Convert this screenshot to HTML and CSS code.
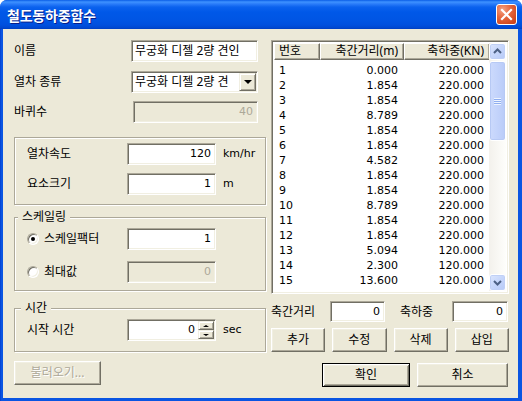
FILE: index.html
```html
<!DOCTYPE html>
<html lang="ko">
<head>
<meta charset="utf-8">
<title>철도동하중함수</title>
<link rel="stylesheet" href="styles.css">
</head>
<body>
<div class="window">
  <div class="titlebar">
    <span class="title">철도동하중함수</span>
    <span class="close"><svg width="19" height="19" viewBox="0 0 19 19"><path d="M5 5 L14 14 M14 5 L5 14" stroke="#fff" stroke-width="2.2" stroke-linecap="square"/></svg></span>
  </div>
  <div class="frame">
    <div class="client">
      <div class="left">
        <div class="row top-row">
          <span class="lbl lbl-top">이름</span>
          <div class="edit w-top">무궁화 디젤 2량 견인</div>
        </div>
        <div class="row top-row gap9">
          <span class="lbl lbl-top">열차 종류</span>
          <div class="edit combo w-top"><span class="combo-text">무궁화 디젤 2량 견</span><span class="dd"><span class="tri-down"></span></span></div>
        </div>
        <div class="row top-row gap8">
          <span class="lbl lbl-top">바퀴수</span>
          <div class="edit disabled w-wheel num latin">40</div>
        </div>

        <div class="group g1">
          <div class="row">
            <span class="lbl lbl-g">열차속도</span>
            <div class="edit w-g num latin">120</div>
            <span class="unit latin">km/hr</span>
          </div>
          <div class="row gap8">
            <span class="lbl lbl-g">요소크기</span>
            <div class="edit w-g num latin">1</div>
            <span class="unit latin">m</span>
          </div>
        </div>

        <div class="group g2">
          <span class="gtitle gt2">스케일링</span>
          <div class="row">
            <span class="lbl lbl-g radio-lbl"><span class="radio checked"></span>스케일팩터</span>
            <div class="edit w-g num latin">1</div>
          </div>
          <div class="row gap11">
            <span class="lbl lbl-g radio-lbl"><span class="radio"></span>최대값</span>
            <div class="edit disabled w-g num latin">0</div>
          </div>
        </div>

        <div class="group g3">
          <span class="gtitle gt3">시간</span>
          <div class="row">
            <span class="lbl lbl-g">시작 시간</span>
            <div class="edit spin-edit w-g"><span class="spin-val latin">0</span><span class="spin"><span class="sbtn"><span class="tri-up"></span></span><span class="sbtn"><span class="tri-down small"></span></span></span></div>
            <span class="unit latin">sec</span>
          </div>
        </div>

        <div class="btn disabled-btn load-btn">불러오기...</div>
      </div>

      <div class="right">
        <div class="listview">
          <div class="lv-main">
            <div class="lv-head">
              <span class="hcell">번호</span>
              <span class="hcell">축간거리(m)</span>
              <span class="hcell">축하중(KN)</span>
              <span class="hfill"></span>
            </div>
            <div class="lv-body latin">
              <div class="lv-row"><span>1</span><span>0.000</span><span>220.000</span></div>
              <div class="lv-row"><span>2</span><span>1.854</span><span>220.000</span></div>
              <div class="lv-row"><span>3</span><span>1.854</span><span>220.000</span></div>
              <div class="lv-row"><span>4</span><span>8.789</span><span>220.000</span></div>
              <div class="lv-row"><span>5</span><span>1.854</span><span>220.000</span></div>
              <div class="lv-row"><span>6</span><span>1.854</span><span>220.000</span></div>
              <div class="lv-row"><span>7</span><span>4.582</span><span>220.000</span></div>
              <div class="lv-row"><span>8</span><span>1.854</span><span>220.000</span></div>
              <div class="lv-row"><span>9</span><span>1.854</span><span>220.000</span></div>
              <div class="lv-row"><span>10</span><span>8.789</span><span>220.000</span></div>
              <div class="lv-row"><span>11</span><span>1.854</span><span>220.000</span></div>
              <div class="lv-row"><span>12</span><span>1.854</span><span>220.000</span></div>
              <div class="lv-row"><span>13</span><span>5.094</span><span>120.000</span></div>
              <div class="lv-row"><span>14</span><span>2.300</span><span>120.000</span></div>
              <div class="lv-row"><span>15</span><span>13.600</span><span>120.000</span></div>
              <div class="lv-row"><span>16</span><span>2.300</span><span>120.000</span></div>
            </div>
          </div>
          <div class="vscroll">
            <span class="sb-btn"><svg width="15" height="15" viewBox="0 0 15 15"><path d="M4 9 L7.5 5.5 L11 9" fill="none" stroke="#4D6185" stroke-width="2"/></svg></span>
            <span class="sb-track">
              <span class="sb-thumb"><span class="grip"></span></span>
            </span>
            <span class="sb-btn"><svg width="15" height="15" viewBox="0 0 15 15"><path d="M4 6 L7.5 9.5 L11 6" fill="none" stroke="#4D6185" stroke-width="2"/></svg></span>
          </div>
        </div>

        <div class="axle-row">
          <span class="lbl-axle">축간거리</span>
          <div class="edit num latin w-axle1">0</div>
          <span class="lbl-load">축하중</span>
          <div class="edit num latin w-axle2">0</div>
        </div>

        <div class="btn-grid">
          <div class="btn">추가</div>
          <div class="btn">수정</div>
          <div class="btn">삭제</div>
          <div class="btn">삽입</div>
        </div>

        <div class="dlg-btns">
          <div class="btn default-btn ok-btn">확인</div>
          <div class="btn cancel-btn">취소</div>
        </div>
      </div>
    </div>
  </div>
</div>
</body>
</html>
```
FILE: styles.css
```css
* { box-sizing: border-box; }
html, body { margin: 0; padding: 0; }
body {
  width: 522px;
  height: 401px;
  overflow: hidden;
  background: #ffffff;
  font-family: "Noto Sans", "Noto Sans CJK KR", sans-serif;
  font-size: 12px;
  line-height: 14px;
  color: #000;
}
.latin {
  font-family: "DejaVu Sans", "Noto Sans CJK KR", sans-serif;
  font-size: 11px;
}

.window {
  width: 522px;
  height: 401px;
  display: flex;
  flex-direction: column;
  background: #0A50DE;
  border-radius: 7px 7px 0 0;
  overflow: hidden;
}

.titlebar {
  height: 29px;
  flex: none;
  display: flex;
  align-items: center;
  justify-content: space-between;
  padding: 0 5px 0 7px;
  background: linear-gradient(to bottom, #0A5DE6 0px, #3E92FF 2px, #2A7CF9 4px, #0B62EE 7px, #0058E8 12px, #0055E4 20px, #0050DE 25px, #0047CF 28px, #003DBE 29px);
}
.title {
  color: #fff;
  font-family: "Noto Sans CJK KR", sans-serif;
  font-weight: bold;
  font-size: 14px;
  line-height: 16px;
  text-shadow: 1px 1px 0 #0A1F8A;
  letter-spacing: -0.2px;
}
.close {
  width: 21px;
  height: 21px;
  border: 1px solid #fff;
  border-radius: 3px;
  display: flex;
  align-items: center;
  justify-content: center;
  background: radial-gradient(circle at 30% 25%, #F4A284 0%, #E6683F 40%, #D1471E 80%, #C43E18 100%);
}

.frame {
  flex: 1;
  display: flex;
  padding: 0 4px 3px 3px;
  background: linear-gradient(to right, #0036C8 0px, #0A55E2 1px, #0A55E2 521px);
}

.client {
  flex: 1;
  background: #ECE9D8;
  display: flex;
  gap: 5px;
  padding: 11px 0 0 11px;
}

.left { width: 252px; display: flex; flex-direction: column; }
.right { width: 238px; display: flex; flex-direction: column; }

.row { display: flex; align-items: center; height: 22px; flex: none; }
.gap8 { margin-top: 8px; }
.gap9 { margin-top: 9px; }
.gap11 { margin-top: 11px; }

.lbl { flex: none; white-space: nowrap; }
.lbl-top { width: 117px; }
.lbl-g { width: 100px; }

.edit {
  height: 22px;
  flex: none;
  background: #fff;
  border: 1px solid;
  border-color: #ACA899 #fff #fff #ACA899;
  box-shadow: inset 1px 1px 0 #716F64, inset -1px -1px 0 #F1EFE2;
  padding: 0 4px 0 3px;
  display: flex;
  align-items: center;
  white-space: nowrap;
  overflow: hidden;
}
.num { justify-content: flex-end; }
.disabled { background: #ECE9D8; color: #ACA899; }
.w-top { width: 127px; }
.w-wheel { width: 125px; margin-left: 2px; }
.w-g { width: 89px; }

.combo { padding: 0 1px 0 3px; justify-content: space-between; }
.combo-text { flex: none; }
.dd {
  width: 17px;
  height: 18px;
  flex: none;
  background: #ECE9D8;
  border: 1px solid;
  border-color: #F1EFE2 #716F64 #716F64 #F1EFE2;
  box-shadow: inset 1px 1px 0 #fff, inset -1px -1px 0 #ACA899;
  display: flex;
  align-items: center;
  justify-content: center;
}
.tri-down {
  width: 0; height: 0;
  border-left: 4px solid transparent;
  border-right: 4px solid transparent;
  border-top: 4px solid #000;
}
.tri-down.small {
  border-left-width: 3px;
  border-right-width: 3px;
  border-top-width: 2px;
}
.tri-up {
  width: 0; height: 0;
  border-left: 3px solid transparent;
  border-right: 3px solid transparent;
  border-bottom: 2px solid #000;
}

.unit { margin-left: 7px; white-space: nowrap; }

.group {
  position: relative;
  flex: none;
  border: 1px solid #ACA899;
  box-shadow: inset 1px 1px 0 #fff, 1px 1px 0 #fff;
  padding-left: 12px;
}
.g1 { margin-top: 14px; padding-top: 5px; padding-bottom: 9px; }
.g2 { margin-top: 12px; padding-top: 10px; padding-bottom: 7px; }
.g3 { margin-top: 17px; padding-top: 10px; padding-bottom: 10px; }
.gtitle {
  position: absolute;
  top: -8px;
  background: #ECE9D8;
  padding: 0 4px;
  line-height: 14px;
}
.gt2 { left: 3px; }
.gt3 { left: 6px; }

.radio-lbl { display: flex; align-items: center; }
.radio {
  width: 12px;
  height: 12px;
  margin-right: 5px;
  border-radius: 50%;
  background: #fff;
  border: 1px solid;
  border-color: #ACA899 #fff #fff #ACA899;
  box-shadow: inset 1px 1px 0 #716F64, inset -1px -1px 0 #F1EFE2;
  position: relative;
  flex: none;
}
.radio.checked::after {
  content: "";
  position: absolute;
  left: 3px;
  top: 3px;
  width: 4px;
  height: 4px;
  border-radius: 50%;
  background: #000;
}

.spin-edit { padding: 0 0 0 4px; }
.spin-val { flex: 1; text-align: right; padding-right: 3px; }
.spin {
  width: 16px;
  height: 18px;
  display: flex;
  flex-direction: column;
  margin-right: 1px;
}
.sbtn {
  flex: 1;
  background: #ECE9D8;
  border: 1px solid;
  border-color: #F1EFE2 #716F64 #716F64 #F1EFE2;
  box-shadow: inset 1px 1px 0 #fff, inset -1px -1px 0 #ACA899;
  display: flex;
  align-items: center;
  justify-content: center;
}

.btn {
  height: 24px;
  flex: none;
  background: #ECE9D8;
  border: 1px solid;
  border-color: #fff #716F64 #716F64 #fff;
  box-shadow: inset -1px -1px 0 #ACA899, inset 1px 1px 0 #F1EFE2;
  display: flex;
  align-items: center;
  justify-content: center;
  white-space: nowrap;
}
.disabled-btn { color: #ACA899; text-shadow: 1px 1px 0 #fff; }
.load-btn { width: 87px; margin-top: 9px; }
.default-btn {
  border: 1px solid #000;
  box-shadow: inset 1px 1px 0 #fff, inset -1px -1px 0 #716F64, inset 2px 2px 0 #F1EFE2, inset -2px -2px 0 #ACA899;
}

.listview {
  height: 254px;
  flex: none;
  display: flex;
  background: #fff;
  border: 1px solid;
  border-color: #ACA899 #fff #fff #ACA899;
  box-shadow: inset 1px 1px 0 #716F64, inset -1px -1px 0 #F1EFE2;
  padding: 2px;
}
.lv-main { flex: 1; overflow: hidden; display: flex; flex-direction: column; }
.lv-head {
  display: flex;
  height: 17px;
  flex: none;
}
.hcell {
  height: 17px;
  flex: none;
  background: #ECE9D8;
  border: 1px solid;
  border-color: #fff #716F64 #716F64 #fff;
  box-shadow: inset -1px -1px 0 #ACA899;
  text-align: right;
  padding: 0 5px;
  line-height: 14px;
  white-space: nowrap;
}
.hcell:nth-child(1) { width: 46px; text-align: left; padding-left: 4px; }
.hcell:nth-child(2) { width: 84px; }
.hcell:nth-child(3) { width: 86px; }
.hfill {
  flex: 1;
  height: 17px;
  background: #ECE9D8;
  border-top: 1px solid #fff;
  border-bottom: 1px solid #716F64;
  box-shadow: inset 0 -1px 0 #ACA899;
}
.lv-body { padding-top: 3px; }
.lv-row { display: flex; height: 15px; line-height: 15px; white-space: nowrap; }
.lv-row span { flex: none; text-align: right; }
.lv-row span:nth-child(1) { width: 46px; text-align: left; padding-left: 5px; }
.lv-row span:nth-child(2) { width: 84px; padding-right: 6px; }
.lv-row span:nth-child(3) { width: 86px; padding-right: 6px; }

.vscroll {
  width: 17px;
  flex: none;
  display: flex;
  flex-direction: column;
  background: linear-gradient(to right, #F3F1EC, #FEFEFB);
}
.sb-btn {
  width: 17px;
  height: 17px;
  flex: none;
  border: 1px solid #fff;
  border-radius: 3px;
  background: linear-gradient(135deg, #DCE6FD 0%, #C6D6FB 50%, #B7CAF7 100%);
  box-shadow: inset 0 0 0 1px #C0D0F6;
  display: flex;
  align-items: center;
  justify-content: center;
}
.sb-track { flex: 1; position: relative; }
.sb-thumb {
  position: absolute;
  left: 0;
  top: 1px;
  width: 17px;
  height: 80px;
  border: 1px solid #fff;
  border-radius: 3px;
  background: linear-gradient(to right, #CCDAFC 0%, #C3D3FB 50%, #B9CBF8 100%);
  box-shadow: inset 0 0 0 1px #B7C9F4;
  display: flex;
  align-items: center;
  justify-content: center;
}
.grip {
  width: 7px;
  height: 7px;
  background: repeating-linear-gradient(to bottom, #EEF4FE 0px, #EEF4FE 1px, #8FAEF0 1px, #8FAEF0 2px);
}

.axle-row {
  display: flex;
  align-items: center;
  margin-top: 7px;
  height: 21px;
  flex: none;
}
.lbl-axle { width: 59px; white-space: nowrap; }
.lbl-load { width: 52px; margin-left: 15px; white-space: nowrap; }
.w-axle1 { width: 55px; height: 21px; }
.w-axle2 { width: 56px; height: 21px; }

.btn-grid {
  display: grid;
  grid-template-columns: repeat(4, 1fr);
  column-gap: 7px;
  margin-top: 6px;
}

.dlg-btns {
  display: flex;
  justify-content: flex-end;
  gap: 7px;
  margin-top: 11px;
  padding-right: 1px;
}
.ok-btn { width: 88px; }
.cancel-btn { width: 91px; }
```
